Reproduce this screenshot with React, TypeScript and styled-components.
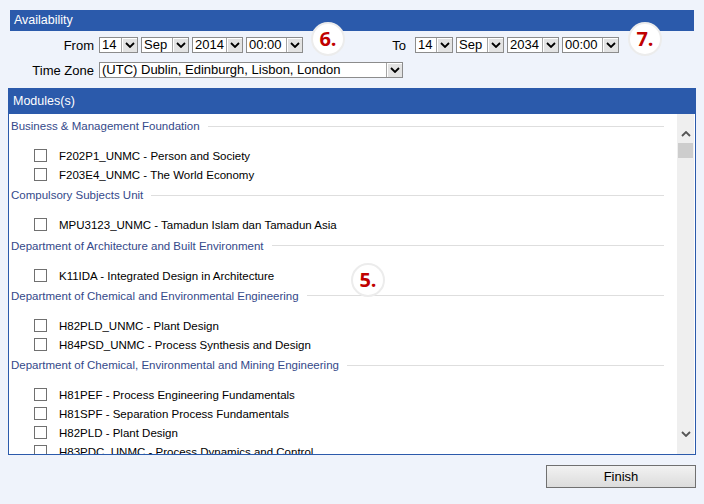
import styled, { createGlobalStyle } from "styled-components";

const GlobalStyle = createGlobalStyle`
  html, body {
    margin: 0;
    padding: 0;
    background: #eff3fb;
  }
  body {
    font-family: "Liberation Sans", Arial, sans-serif;
  }
`;

const Page = styled.div`
  position: relative;
  width: 704px;
  height: 504px;
  box-sizing: border-box;
  padding: 10px 8px 0;
  display: flex;
  flex-direction: column;
  overflow: hidden;
`;

const Section = styled.div`
  margin: 0 2px;
`;

const BarTitle = styled.div<{ $tall?: boolean }>`
  background: #2b5aab;
  color: #fff;
  font-size: 12.5px;
  height: ${(p) => (p.$tall ? 25 : 21)}px;
  line-height: ${(p) => (p.$tall ? 25 : 21)}px;
  padding-left: 4px;
`;

const FieldRow = styled.div<{ $top: number }>`
  display: flex;
  align-items: center;
  margin-top: ${(p) => p.$top}px;
  height: 16px;
`;

const FieldLabel = styled.div<{ $width: number }>`
  width: ${(p) => p.$width}px;
  text-align: right;
  padding-right: ${(p) => (p.$width > 90 ? 9 : 5)}px;
  font-size: 13px;
  color: #000;
  box-sizing: border-box;
  flex-shrink: 0;
`;

const SelectGroup = styled.div`
  display: flex;
  gap: 3px;
`;

const Select = styled.div<{ $width: number }>`
  width: ${(p) => p.$width}px;
  height: 16px;
  box-sizing: border-box;
  border: 1px solid #8c8c8c;
  background: #fff;
  display: flex;
  align-items: stretch;
`;

const SelectValue = styled.span`
  flex: 1;
  font-size: 13px;
  line-height: 14px;
  padding-left: 2px;
  color: #000;
  white-space: nowrap;
  overflow: hidden;
`;

const SelectArrow = styled.span`
  width: 16px;
  box-sizing: border-box;
  border-left: 1px solid #a5a5a5;
  background: #e3e3e3;
  box-shadow: inset 1px 1px 0 #fff;
  display: flex;
  align-items: center;
  justify-content: center;
`;

const Chevron = ({ up }: { up?: boolean }) => (
  <svg width="10" height="6" viewBox="0 0 10 6">
    <path
      d={up ? "M1 5 L5 1 L9 5" : "M1 1 L5 5 L9 1"}
      fill="none"
      stroke="currentColor"
      strokeWidth="1.8"
    />
  </svg>
);

const Dropdown = ({ value, width }: { value: string; width: number }) => (
  <Select $width={width}>
    <SelectValue>{value}</SelectValue>
    <SelectArrow>
      <Chevron />
    </SelectArrow>
  </Select>
);

const ModulesBox = styled.div`
  margin-top: 10px;
  border: 1px solid #2b5aab;
  background: #fff;
`;

const ListArea = styled.div`
  display: flex;
  height: 340px;
`;

const List = styled.div`
  flex: 1;
  overflow: hidden;
  padding: 2px 13px 0 0;
`;

const Group = styled.div``;

const GroupHeading = styled.div`
  display: flex;
  align-items: center;
  gap: 8px;
  height: 20px;
  padding-left: 2px;
  font-size: 11.5px;
  color: #34498a;
  white-space: nowrap;

  &::after {
    content: "";
    flex: 1;
    height: 1px;
    background: #dedede;
  }
`;

const Items = styled.div`
  padding: 11px 0 0.25px;
`;

const Item = styled.label`
  display: flex;
  align-items: center;
  height: 19px;
  padding-left: 25px;
  font-size: 11.5px;
  line-height: 19px;
  color: #000;
  white-space: nowrap;
`;

const Check = styled.span`
  width: 13px;
  height: 13px;
  box-sizing: border-box;
  border: 1px solid #707070;
  background: #fff;
  margin: -2px 12px 0 0;
  flex-shrink: 0;
`;

const Scrollbar = styled.div`
  width: 17px;
  margin-right: 1px;
  background: #efefef;
  display: flex;
  flex-direction: column;
  align-items: center;
  color: #555;
  padding-top: 17px;
  padding-bottom: 17px;
  box-sizing: border-box;
`;

const Thumb = styled.div`
  width: 15px;
  height: 15px;
  background: #cdcdcd;
  margin-top: 6px;
`;

const Filler = styled.div`
  flex: 1;
`;

const Footer = styled.div`
  display: flex;
  justify-content: flex-end;
  margin-top: 10px;
`;

const Button = styled.button`
  width: 150px;
  height: 23px;
  border: 1px solid #707070;
  background: linear-gradient(#f2f2f2, #dcdcdc);
  font-family: "Liberation Sans", Arial, sans-serif;
  font-size: 13px;
  color: #000;
  padding: 0;
`;

const Badge = styled.div<{ $x: number; $y: number }>`
  position: absolute;
  left: ${(p) => p.$x - 17}px;
  top: ${(p) => p.$y - 17}px;
  width: 34px;
  height: 34px;
  box-sizing: border-box;
  border-radius: 50%;
  background: #fff;
  border: 2px solid #ececec;
  color: #c00000;
  font-family: "Open Sans", sans-serif;
  font-weight: 700;
  font-size: 20px;
  line-height: 29px;
  text-align: center;
`;

const groups = [
  {
    title: "Business & Management Foundation",
    items: ["F202P1_UNMC - Person and Society", "F203E4_UNMC - The World Economy"],
  },
  {
    title: "Compulsory Subjects Unit",
    items: ["MPU3123_UNMC - Tamadun Islam dan Tamadun Asia"],
  },
  {
    title: "Department of Architecture and Built Environment",
    items: ["K11IDA - Integrated Design in Architecture"],
  },
  {
    title: "Department of Chemical and Environmental Engineering",
    items: ["H82PLD_UNMC - Plant Design", "H84PSD_UNMC - Process Synthesis and Design"],
  },
  {
    title: "Department of Chemical, Environmental and Mining Engineering",
    items: [
      "H81PEF - Process Engineering Fundamentals",
      "H81SPF - Separation Process Fundamentals",
      "H82PLD - Plant Design",
      "H83PDC_UNMC - Process Dynamics and Control",
    ],
  },
];

export default function App() {
  return (
    <Page>
      <GlobalStyle />
      <Section>
        <BarTitle>Availability</BarTitle>
        <FieldRow $top={6}>
          <FieldLabel $width={89}>From</FieldLabel>
          <SelectGroup>
            <Dropdown value="14" width={39} />
            <Dropdown value="Sep" width={48} />
            <Dropdown value="2014" width={51} />
            <Dropdown value="00:00" width={57} />
          </SelectGroup>
          <FieldLabel $width={112}>To</FieldLabel>
          <SelectGroup>
            <Dropdown value="14" width={38} />
            <Dropdown value="Sep" width={48} />
            <Dropdown value="2034" width={52} />
            <Dropdown value="00:00" width={57} />
          </SelectGroup>
        </FieldRow>
        <FieldRow $top={9}>
          <FieldLabel $width={89}>Time Zone</FieldLabel>
          <Dropdown value="(UTC) Dublin, Edinburgh, Lisbon, London" width={304} />
        </FieldRow>
      </Section>

      <ModulesBox>
        <BarTitle $tall>Modules(s)</BarTitle>
        <ListArea>
          <List>
            {groups.map((g) => (
              <Group key={g.title}>
                <GroupHeading>{g.title}</GroupHeading>
                <Items>
                  {g.items.map((it) => (
                    <Item key={it}>
                      <Check />
                      {it}
                    </Item>
                  ))}
                </Items>
              </Group>
            ))}
          </List>
          <Scrollbar>
            <Chevron up />
            <Thumb />
            <Filler />
            <Chevron />
          </Scrollbar>
        </ListArea>
      </ModulesBox>

      <Footer>
        <Button>Finish</Button>
      </Footer>

      <Badge $x={328} $y={39}>6.</Badge>
      <Badge $x={645} $y={39}>7.</Badge>
      <Badge $x={368} $y={280}>5.</Badge>
    </Page>
  );
}
